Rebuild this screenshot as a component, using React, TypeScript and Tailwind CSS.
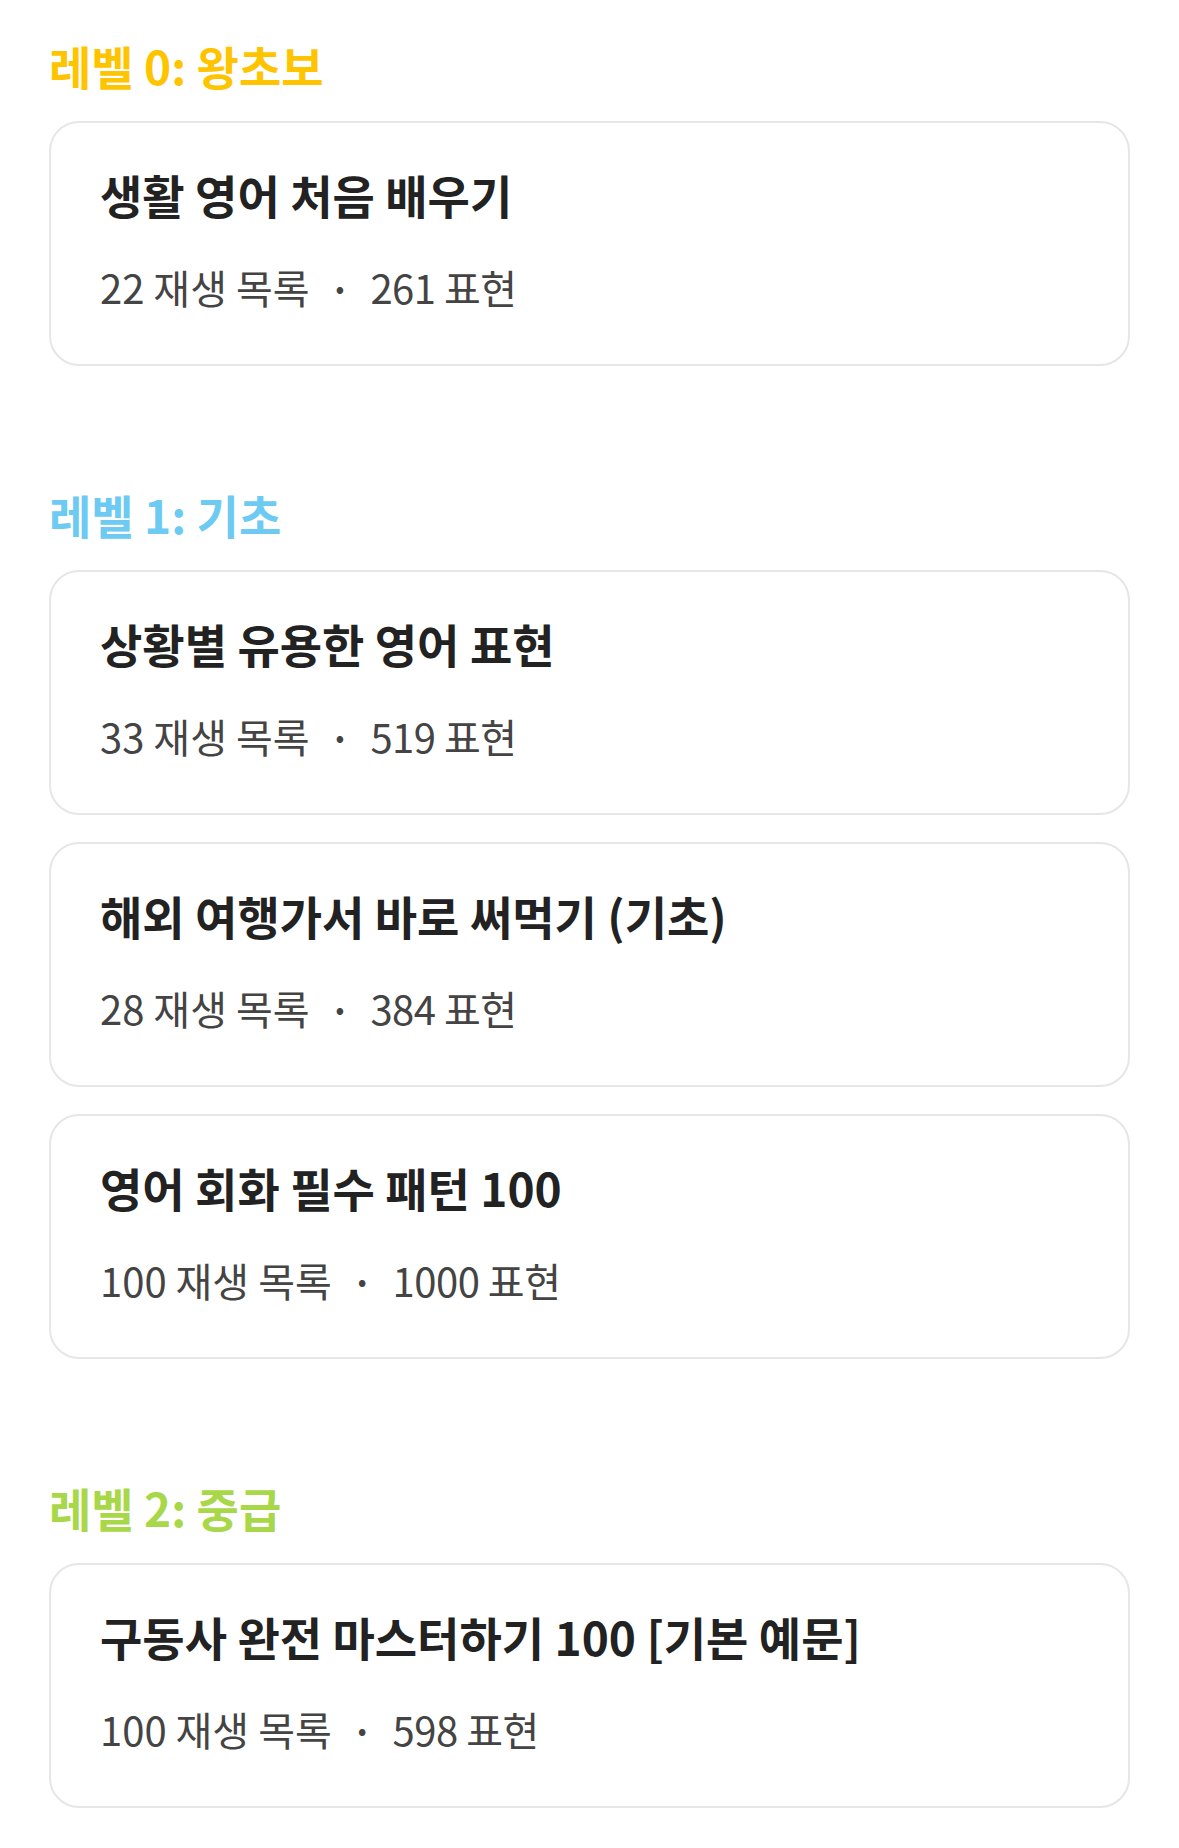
const FONT = "font-['Noto_Sans_CJK_KR','Noto_Sans',sans-serif]";

type Course = { title: string; playlists: number; expressions: number };

const LEVELS: { label: string; color: string; courses: Course[] }[] = [
  {
    label: '레벨 0: 왕초보',
    color: 'text-[#ffc400]',
    courses: [{ title: '생활 영어 처음 배우기', playlists: 22, expressions: 261 }],
  },
  {
    label: '레벨 1: 기초',
    color: 'text-[#6ccaf3]',
    courses: [
      { title: '상황별 유용한 영어 표현', playlists: 33, expressions: 519 },
      { title: '해외 여행가서 바로 써먹기 (기초)', playlists: 28, expressions: 384 },
      { title: '영어 회화 필수 패턴 100', playlists: 100, expressions: 1000 },
    ],
  },
  {
    label: '레벨 2: 중급',
    color: 'text-[#a8d84a]',
    courses: [{ title: '구동사 완전 마스터하기 100 [기본 예문]', playlists: 100, expressions: 598 }],
  },
];

function CourseCard({ course }: { course: Course }) {
  return (
    <div className="rounded-[30px] border-2 border-[#e6e6e6] bg-white px-[49px] pt-[45px] pb-[54px]">
      <h3 className="text-[46px] leading-[52px] font-bold text-[#222]">{course.title}</h3>
      <p className="mt-[44px] text-[40px] leading-[46px] text-[#444] flex items-center">
        <span>{course.playlists} 재생 목록</span>
        <span className="mx-[26px] text-[26px]">•</span>
        <span className="tracking-[-0.5px]">{course.expressions} 표현</span>
      </p>
    </div>
  );
}

export default function App() {
  return (
    <div className={`${FONT} min-h-screen bg-white px-[49px] pt-[37px] pb-[40px]`}>
      {LEVELS.map((level, i) => (
        <section key={i} className={i > 0 ? 'mt-[120px]' : ''}>
          <h2 className={`text-[46px] leading-[56px] font-bold ${level.color}`}>{level.label}</h2>
          <div className="mt-[28px] flex flex-col gap-[27px]">
            {level.courses.map((c, j) => (
              <CourseCard key={j} course={c} />
            ))}
          </div>
        </section>
      ))}
    </div>
  );
}
